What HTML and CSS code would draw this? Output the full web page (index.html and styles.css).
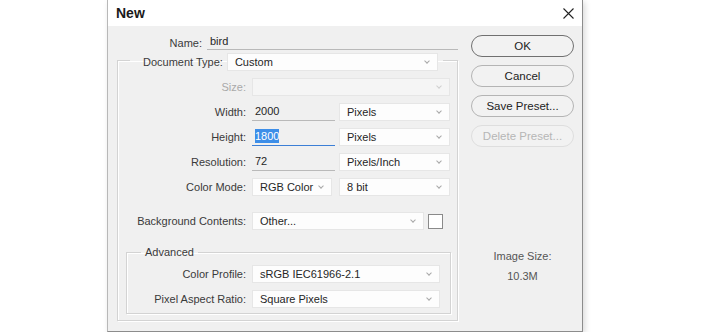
FILE: index.html
```html
<!DOCTYPE html>
<html lang="en">
<head>
    <meta charset="utf-8">
    <title>New</title>
    <link rel="stylesheet" href="styles.css">
</head>
<body>
    <div class="dialog">
        <div class="titlebar">
            <span class="title">New</span>
            <svg class="close" width="11" height="11" viewBox="0 0 11 11">
                <path d="M0.5 0.5 L10.5 10.5 M10.5 0.5 L0.5 10.5" stroke="#222" stroke-width="1.1" fill="none"/>
            </svg>
        </div>

        <div class="content">
            <div class="main">
                <div class="name-row">
                    <label class="name-label">Name:</label>
                    <div class="text-field name-field">bird</div>
                </div>

                <fieldset class="doc-box">
                    <legend class="doc-legend">
                        <label>Document Type:</label>
                        <div class="select doc-type">Custom<span class="chev"></span></div>
                    </legend>

                    <div class="row">
                        <label class="row-label disabled">Size:</label>
                        <div class="select size-select is-disabled"><span class="chev"></span></div>
                    </div>

                    <div class="row">
                        <label class="row-label">Width:</label>
                        <div class="text-field num-field">2000</div>
                        <div class="select unit-select">Pixels<span class="chev"></span></div>
                    </div>

                    <div class="row">
                        <label class="row-label">Height:</label>
                        <div class="text-field num-field focused"><span class="selected">1800</span></div>
                        <div class="select unit-select">Pixels<span class="chev"></span></div>
                    </div>

                    <div class="row">
                        <label class="row-label">Resolution:</label>
                        <div class="text-field num-field">72</div>
                        <div class="select unit-select">Pixels/Inch<span class="chev"></span></div>
                    </div>

                    <div class="row">
                        <label class="row-label">Color Mode:</label>
                        <div class="select mode-select">RGB Color<span class="chev"></span></div>
                        <div class="select unit-select">8 bit<span class="chev"></span></div>
                    </div>

                    <div class="row bg-row">
                        <label class="row-label">Background Contents:</label>
                        <div class="select bg-select">Other...<span class="chev"></span></div>
                        <div class="swatch"></div>
                    </div>

                    <fieldset class="adv-box">
                        <legend class="adv-legend">Advanced</legend>

                        <div class="row adv-row">
                            <label class="row-label adv-label">Color Profile:</label>
                            <div class="select adv-select">sRGB IEC61966-2.1<span class="chev"></span></div>
                        </div>

                        <div class="row adv-row">
                            <label class="row-label adv-label">Pixel Aspect Ratio:</label>
                            <div class="select adv-select">Square Pixels<span class="chev"></span></div>
                        </div>
                    </fieldset>
                </fieldset>
            </div>

            <div class="side">
                <button class="btn default">OK</button>
                <button class="btn">Cancel</button>
                <button class="btn">Save Preset...</button>
                <button class="btn" disabled>Delete Preset...</button>

                <div class="image-size">
                    <div>Image Size:</div>
                    <div class="size-value">10.3M</div>
                </div>
            </div>
        </div>
    </div>
</body>
</html>
```

FILE: styles.css
```css
:root {
    --dialog-bg: #f0f0f0;
    --text-color: #262626;
    --label-color: #3a3a3a;
    --disabled-text: #a9a9a9;
    --line-color: #d3d3d3;
    --field-line: #b9b9b9;
    --focus-blue: #3c7fd6;
}

* {
    margin: 0;
    padding: 0;
    box-sizing: border-box;
    font-family: Tahoma, 'Liberation Sans', Arial, sans-serif;
}

body {
    background-color: #fff;
    color: var(--text-color);
    font-size: 11px;
}

.dialog {
    margin-left: 107px;
    width: 476px;
    height: 332px;
    border: 1px solid #8c8c8c;
    border-left-color: #b8b8b8;
    border-top: none;
    background-color: var(--dialog-bg);
    box-shadow: 2px 2px 6px rgba(0, 0, 0, 0.15);
    display: flex;
    flex-direction: column;
}

/* Title bar */
.titlebar {
    height: 26px;
    background-color: #fff;
    display: flex;
    align-items: center;
    justify-content: space-between;
    padding: 0 8px 0 8px;
}

.title {
    font-size: 14px;
    font-weight: bold;
    color: #1a1a1a;
}

.close {
    display: block;
}

.content {
    flex: 1;
    display: flex;
}

.main {
    width: 354px;
    padding-top: 10px;
}

/* Name row */
.name-row {
    display: flex;
    align-items: flex-end;
    height: 14px;
}

.name-label {
    width: 94px;
    text-align: right;
    color: var(--label-color);
    line-height: 14px;
}

.text-field {
    height: 18px;
    line-height: 16px;
    padding-left: 3px;
    border-bottom: 1px solid var(--field-line);
    color: var(--text-color);
}

.name-field {
    width: 251px;
    height: 15px;
    line-height: 13px;
    margin-left: 5px;
    padding-left: 3px;
}

/* Group boxes */
fieldset {
    border: 1px solid var(--line-color);
    box-shadow: 1px 1px 0 #fff, inset 1px 1px 0 #fff;
}

.doc-box {
    margin-left: 9px;
    width: 341px;
    padding: 0;
    height: 271px;
}

.doc-legend {
    margin-left: 12px;
    padding: 3px 5px 0 13px;
    display: flex;
    align-items: center;
}

.doc-legend label {
    color: var(--label-color);
    margin-right: 4px;
}

.row {
    display: flex;
    align-items: center;
    height: 18px;
    margin-top: 7px;
}

.doc-legend + .row {
    margin-top: 7px;
}

.row-label {
    width: 128px;
    text-align: right;
    color: var(--label-color);
    margin-right: 6px;
}

.row-label.disabled {
    color: var(--disabled-text);
}

/* Select boxes */
.select {
    position: relative;
    height: 18px;
    line-height: 17px;
    padding-left: 7px;
    background-color: #fdfdfd;
    border: 1px solid #e6e6e6;
    color: var(--text-color);
}

.select.is-disabled {
    background-color: #f5f5f5;
    border-color: #e6e6e6;
}

.chev {
    position: absolute;
    right: 8px;
    top: 5px;
    width: 4px;
    height: 4px;
    border-right: 1px solid #a8a8a8;
    border-bottom: 1px solid #a8a8a8;
    transform: rotate(45deg);
}

.is-disabled .chev {
    border-color: #cfcfcf;
}

.doc-type {
    width: 211px;
}

.size-select {
    width: 198px;
}

.num-field {
    width: 83px;
    margin-right: 4px;
}

.num-field.focused {
    border-bottom-color: var(--focus-blue);
}

.selected {
    background-color: #3d8ee8;
    color: #fff;
    padding: 1px 0;
}

.unit-select {
    width: 111px;
}

.mode-select {
    width: 80px;
    margin-right: 7px;
}

.bg-row {
    margin-top: 16px;
}

.bg-select {
    width: 172px;
    margin-right: 4px;
}

.swatch {
    width: 15px;
    height: 15px;
    background-color: #fff;
    border: 1px solid #8a8a8a;
}

/* Advanced group */
.adv-box {
    margin: 15px 0 0 8px;
    width: 325px;
    height: 69px;
    padding: 0;
}

.adv-legend {
    margin-left: 14px;
    padding: 0 4px;
    color: var(--label-color);
    line-height: 14px;
}

.adv-row {
    margin-top: 7px;
}

.adv-legend + .adv-row {
    margin-top: 6px;
}

.adv-label {
    width: 119px;
}

.adv-select {
    width: 188px;
}

/* Buttons column */
.side {
    width: 120px;
    padding: 9px 0 0 9px;
    display: flex;
    flex-direction: column;
}

.btn {
    width: 103px;
    height: 22px;
    margin-bottom: 8px;
    border: 1px solid #b4b4b4;
    border-radius: 11px;
    background-color: #f2f2f2;
    color: #222;
    font-size: 11.5px;
}

.btn.default {
    border-color: #707070;
}

.btn:disabled {
    border-color: #dedede;
    color: #b6b6b6;
}

.image-size {
    margin-top: 91px;
    width: 103px;
    text-align: center;
    color: #555;
    line-height: 20px;
}
```
